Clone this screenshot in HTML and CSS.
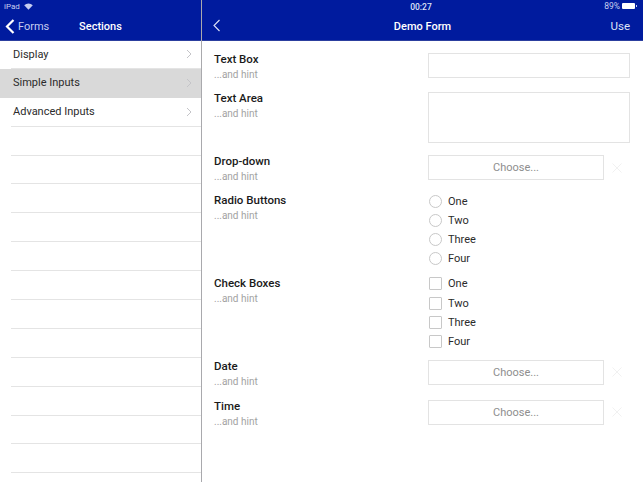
FILE: index.html
```html
<!DOCTYPE html>
<html lang="en">
<head>
  <meta charset="UTF-8" />
  <title>Demo Form</title>
  <link rel="stylesheet" href="styles.css">
</head>
<body>

<div class="app">
  <aside class="sidebar">
    <header class="topbar">
      <div class="status">
        <span>iPad</span>
        <svg class="wifi" width="9" height="7" viewBox="0 0 9 7"><path d="M4.5 6.8 L0.2 2.2 A6.2 6.2 0 0 1 8.8 2.2 Z" fill="#c6cdf0"/></svg>
      </div>
      <div class="nav">
        <a class="back">
          <svg width="10" height="15" viewBox="0 0 10 15"><path d="M8.5 1 L2 7.5 L8.5 14" fill="none" stroke="#fff" stroke-width="2.2"/></svg>
          <span>Forms</span>
        </a>
        <span class="nav-title">Sections</span>
      </div>
    </header>
    <ul class="menu">
      <li class="menu-item">Display<svg class="chev" width="6" height="10" viewBox="0 0 6 10"><path d="M1 1 L5 5 L1 9" /></svg></li>
      <li class="menu-item selected">Simple Inputs<svg class="chev" width="6" height="10" viewBox="0 0 6 10"><path d="M1 1 L5 5 L1 9" /></svg></li>
      <li class="menu-item">Advanced Inputs<svg class="chev" width="6" height="10" viewBox="0 0 6 10"><path d="M1 1 L5 5 L1 9" /></svg></li>
      <li class="menu-item"></li>
      <li class="menu-item"></li>
      <li class="menu-item"></li>
      <li class="menu-item"></li>
      <li class="menu-item"></li>
      <li class="menu-item"></li>
      <li class="menu-item"></li>
      <li class="menu-item"></li>
      <li class="menu-item"></li>
      <li class="menu-item"></li>
      <li class="menu-item"></li>
      <li class="menu-item"></li>
    </ul>
  </aside>

  <main class="detail">
    <header class="topbar">
      <div class="status status-main">
        <span class="time">00:27</span>
        <span class="battery-wrap">89%<span class="battery"></span></span>
      </div>
      <div class="nav nav-main">
        <svg class="back-thin" width="8" height="13" viewBox="0 0 8 13"><path d="M6.5 1 L1 6.5 L6.5 12" fill="none" stroke="#dfe3f7" stroke-width="1.1"/></svg>
        <span class="nav-title">Demo Form</span>
        <span class="use">Use</span>
      </div>
    </header>

    <div class="form">
      <div class="row">
        <div class="label"><b>Text Box</b><small>...and hint</small></div>
        <div class="field"><div class="box text-box"></div></div>
      </div>
      <div class="row row-area">
        <div class="label"><b>Text Area</b><small>...and hint</small></div>
        <div class="field"><div class="box text-area"></div></div>
      </div>
      <div class="row">
        <div class="label"><b>Drop-down</b><small>...and hint</small></div>
        <div class="field">
          <div class="box choose">Choose...</div>
          <svg class="clear" width="10" height="10" viewBox="0 0 10 10"><path d="M0.5 0.5 L9.5 9.5 M9.5 0.5 L0.5 9.5"/></svg>
        </div>
      </div>
      <div class="row row-group">
        <div class="label"><b>Radio Buttons</b><small>...and hint</small></div>
        <div class="options">
          <div class="option"><span class="radio"></span>One</div>
          <div class="option"><span class="radio"></span>Two</div>
          <div class="option"><span class="radio"></span>Three</div>
          <div class="option"><span class="radio"></span>Four</div>
        </div>
      </div>
      <div class="row row-group">
        <div class="label"><b>Check Boxes</b><small>...and hint</small></div>
        <div class="options">
          <div class="option"><span class="check"></span>One</div>
          <div class="option"><span class="check"></span>Two</div>
          <div class="option"><span class="check"></span>Three</div>
          <div class="option"><span class="check"></span>Four</div>
        </div>
      </div>
      <div class="row row-date">
        <div class="label"><b>Date</b><small>...and hint</small></div>
        <div class="field">
          <div class="box choose">Choose...</div>
          <svg class="clear" width="10" height="10" viewBox="0 0 10 10"><path d="M0.5 0.5 L9.5 9.5 M9.5 0.5 L0.5 9.5"/></svg>
        </div>
      </div>
      <div class="row">
        <div class="label"><b>Time</b><small>...and hint</small></div>
        <div class="field">
          <div class="box choose">Choose...</div>
          <svg class="clear" width="10" height="10" viewBox="0 0 10 10"><path d="M0.5 0.5 L9.5 9.5 M9.5 0.5 L0.5 9.5"/></svg>
        </div>
      </div>
    </div>
  </main>
</div>

</body>
</html>
```

FILE: styles.css
```css
* {
  box-sizing: border-box;
}

body {
  margin: 0;
  font-family: Roboto, "Noto Sans", sans-serif;
  background: #fff;
  color: #1a1a1a;
  overflow: hidden;
}

.app {
  display: flex;
  width: 643px;
  height: 482px;
}

.sidebar {
  width: 202px;
  flex: none;
  border-right: 1px solid #a9a9ad;
}

.detail {
  flex: 1;
}

.topbar {
  height: 41px;
  background: #001b9e;
  color: #fff;
  border-bottom: 1px solid #2c3f9f;
}

.status {
  display: flex;
  align-items: center;
  gap: 4px;
  height: 13px;
  padding-left: 4px;
  font-size: 8px;
  color: #c6cdf0;
}

.status-main {
  position: relative;
  justify-content: center;
  padding: 0 3px 0 0;
}

.time {
  font-size: 8.5px;
  font-weight: 500;
  color: #dfe3f7;
}

.battery-wrap {
  position: absolute;
  right: 8px;
  top: 1px;
  display: flex;
  align-items: center;
  gap: 2px;
  font-size: 8.5px;
}

.battery {
  position: relative;
  width: 13px;
  height: 6px;
  background: #fff;
  border-radius: 1px;
}

.battery::after {
  content: "";
  position: absolute;
  right: -2px;
  top: 2px;
  width: 1px;
  height: 2px;
  background: #c6cdf0;
}

.nav {
  position: relative;
  display: flex;
  align-items: center;
  justify-content: center;
  height: 27px;
  font-size: 11px;
}

.nav-title {
  font-weight: 500;
}

.back {
  position: absolute;
  left: 5px;
  top: 6px;
  display: flex;
  align-items: center;
  gap: 3px;
  color: #c6cdf0;
}

.back-thin {
  position: absolute;
  left: 11px;
  top: 6px;
}

.use {
  position: absolute;
  right: 13px;
  top: 6px;
  font-size: 11.5px;
  color: #dfe3f7;
}

.menu {
  list-style: none;
  margin: 0;
  padding: 0;
  height: 441px;
  overflow: hidden;
}

.menu-item {
  display: flex;
  align-items: center;
  justify-content: space-between;
  height: 28.9px;
  margin-left: 11px;
  padding: 0 9px 0 2px;
  font-size: 11px;
  color: #2b2b2b;
  border-bottom: 1px solid #e4e4e4;
}

.menu-item:first-child {
  height: 27.9px;
}

.menu-item.selected {
  margin-left: 0;
  padding-left: 13px;
  background: #d9d9d9;
  border-bottom-color: #d9d9d9;
}

.chev path {
  fill: none;
  stroke: #c4c4c8;
  stroke-width: 1;
}

.form {
  padding: 12px 13px 0 12px;
}

.row {
  display: flex;
  height: 25px;
  margin-bottom: 14px;
}

.row-area {
  height: 51px;
  margin-bottom: 12px;
}

.row-group {
  height: auto;
  margin-bottom: 11.4px;
}

.row-date {
  margin-bottom: 15px;
}

.label {
  width: 214px;
  flex: none;
}

.label b {
  display: block;
  font-size: 11.5px;
  line-height: 13px;
  font-weight: 500;
  color: #1a1a1a;
}

.label small {
  display: block;
  margin-top: 3px;
  font-size: 10px;
  line-height: 12px;
  color: #a2a2a2;
}

.field {
  display: flex;
  align-items: center;
}

.box {
  border: 1px solid #e3e3e3;
  background: #fff;
}

.text-box {
  width: 202px;
  height: 25px;
}

.text-area {
  width: 202px;
  height: 51px;
}

.choose {
  display: flex;
  align-items: center;
  justify-content: center;
  width: 176px;
  height: 25px;
  font-size: 11px;
  color: #8e8e8e;
}

.clear {
  margin-left: 8px;
}

.clear path {
  fill: none;
  stroke: #f1f1f1;
  stroke-width: 1;
}

.options {
  display: flex;
  flex-direction: column;
  gap: 5.2px;
}

.option {
  display: flex;
  align-items: center;
  gap: 6px;
  height: 14px;
  font-size: 11px;
  color: #2b2b2b;
}

.radio,
.check {
  width: 13px;
  height: 13px;
  margin-left: 1px;
  border: 1px solid #c8c8c8;
}

.radio {
  border-radius: 50%;
}

.check {
  border-radius: 1px;
}
```
